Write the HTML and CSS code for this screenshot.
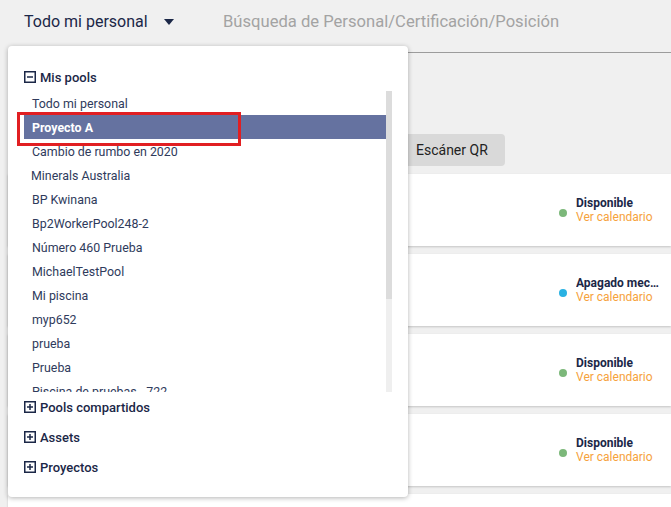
FILE: index.html
```html
<!DOCTYPE html>
<html lang="es">
<head>
<meta charset="utf-8">
<title>Personal</title>
<link rel="stylesheet" href="styles.css">
</head>
<body>
<div class="page">
  <header class="topbar">
    <div class="selector">
      <span class="selector-label">Todo mi personal</span>
      <svg class="caret" width="10" height="6" viewBox="0 0 10 6"><path d="M0 0 H10 L5 6 Z" fill="#1b2747"/></svg>
    </div>
    <div class="search">Búsqueda de Personal/Certificación/Posición</div>
  </header>

  <div class="toolbar">
    <button class="btn-qr">Escáner QR</button>
  </div>

  <div class="cards">
    <div class="card"><div class="status"><span class="dot green"></span><div class="status-text"><div class="status-name">Disponible</div><div class="status-link">Ver calendario</div></div></div></div>
    <div class="card"><div class="status"><span class="dot blue"></span><div class="status-text"><div class="status-name">Apagado mecánicamente</div><div class="status-link">Ver calendario</div></div></div></div>
    <div class="card"><div class="status"><span class="dot green"></span><div class="status-text"><div class="status-name">Disponible</div><div class="status-link">Ver calendario</div></div></div></div>
    <div class="card"><div class="status"><span class="dot green"></span><div class="status-text"><div class="status-name">Disponible</div><div class="status-link">Ver calendario</div></div></div></div>
    <div class="card"></div>
  </div>

  <div class="dropdown">
    <div class="group-head open">
      <svg class="box-icon" width="12" height="12" viewBox="0 0 12 12"><rect x="0.75" y="0.75" width="10.5" height="10.5" fill="none" stroke="#1b2747" stroke-width="1.5"/><path d="M3 6 H9" stroke="#1b2747" stroke-width="1.5"/></svg>
      <span>Mis pools</span>
    </div>
    <div class="pool-scroll">
      <ul class="pool-list">
        <li>Todo mi personal</li>
        <li class="selected">Proyecto A</li>
        <li>Cambio de rumbo en 2020</li>
        <li class="shift">Minerals Australia</li>
        <li>BP Kwinana</li>
        <li>Bp2WorkerPool248-2</li>
        <li>Número 460 Prueba</li>
        <li>MichaelTestPool</li>
        <li>Mi piscina</li>
        <li>myp652</li>
        <li>prueba</li>
        <li>Prueba</li>
        <li>Piscina de pruebas - 722</li>
      </ul>
      <div class="scrollbar"><div class="thumb"></div></div>
    </div>
    <div class="group-head collapsed first">
      <svg class="box-icon" width="12" height="12" viewBox="0 0 12 12"><rect x="0.75" y="0.75" width="10.5" height="10.5" fill="none" stroke="#1b2747" stroke-width="1.5"/><path d="M3 6 H9 M6 3 V9" stroke="#1b2747" stroke-width="1.5"/></svg>
      <span>Pools compartidos</span>
    </div>
    <div class="group-head collapsed">
      <svg class="box-icon" width="12" height="12" viewBox="0 0 12 12"><rect x="0.75" y="0.75" width="10.5" height="10.5" fill="none" stroke="#1b2747" stroke-width="1.5"/><path d="M3 6 H9 M6 3 V9" stroke="#1b2747" stroke-width="1.5"/></svg>
      <span>Assets</span>
    </div>
    <div class="group-head collapsed">
      <svg class="box-icon" width="12" height="12" viewBox="0 0 12 12"><rect x="0.75" y="0.75" width="10.5" height="10.5" fill="none" stroke="#1b2747" stroke-width="1.5"/><path d="M3 6 H9 M6 3 V9" stroke="#1b2747" stroke-width="1.5"/></svg>
      <span>Proyectos</span>
    </div>
    <div class="highlight-box"></div>
  </div>
</div>
</body>
</html>
```

FILE: styles.css
```css
* { box-sizing: border-box; }

html, body {
  margin: 0;
  padding: 0;
}

body {
  background: #f0f0f0;
  font-family: Roboto, "Noto Sans", Arial, sans-serif;
  color: #1b2747;
  overflow: hidden;
  width: 671px;
  height: 507px;
}

.page {
  position: relative;
  height: 507px;
  overflow: hidden;
}

.topbar {
  display: flex;
  height: 53px;
}

.selector {
  display: flex;
  align-items: center;
  gap: 16px;
  width: 199px;
  height: 42px;
  padding-left: 24px;
  font-size: 16px;
  color: #1b2747;
}

.caret {
  margin-top: 1px;
}

.search {
  flex: 1;
  height: 53px;
  padding-top: 13px;
  padding-left: 24px;
  font-size: 16.6px;
  line-height: 18px;
  color: #a3a3a3;
  border-bottom: 1px solid #9c9c9c;
}

.toolbar {
  display: flex;
  height: 121px;
  padding-top: 81px;
  padding-left: 401px;
}

.btn-qr {
  height: 32px;
  padding: 0 17px 0 15px;
  border: none;
  border-radius: 4px;
  background: #d9d9d9;
  font-family: Roboto, "Noto Sans", Arial, sans-serif;
  font-size: 14px;
  color: #222;
}

.cards {
  display: flex;
  flex-direction: column;
  gap: 8px;
  padding-left: 8px;
}

.card {
  height: 72px;
  flex: none;
  background: #fff;
  box-shadow: 0 1px 2px rgba(0, 0, 0, 0.18);
  display: flex;
  justify-content: flex-end;
  align-items: center;
}

.status {
  width: 112px;
  display: flex;
  align-items: center;
  gap: 9px;
}

.dot {
  width: 8px;
  height: 8px;
  border-radius: 50%;
  flex: none;
  margin-top: 5px;
}

.dot.green { background: #7cb87a; }
.dot.blue { background: #29b2e3; }

.status-text {
  min-width: 0;
  flex: 1;
  padding-right: 8px;
  font-size: 12px;
  line-height: 14px;
}

.status-name {
  font-weight: 700;
  color: #1b2747;
  white-space: nowrap;
  overflow: hidden;
  text-overflow: ellipsis;
}

.status-link {
  color: #f6a23c;
  white-space: nowrap;
}

/* dropdown overlay */
.dropdown {
  position: absolute;
  left: 8px;
  top: 46px;
  width: 400px;
  height: 451px;
  background: #fff;
  border-radius: 4px;
  box-shadow: 0 1px 5px rgba(0, 0, 0, 0.3);
  padding: 19px 16px 18px 16px;
}

.group-head {
  display: flex;
  align-items: center;
  gap: 4px;
  height: 24px;
  font-size: 13px;
  font-weight: 500;
  color: #1b2747;
}

.group-head.open {
  margin-bottom: 2px;
}

.group-head.collapsed {
  margin-top: 6px;
}

.group-head.first {
  margin-top: 3px;
}

.box-icon {
  flex: none;
}

.pool-scroll {
  display: flex;
  width: 368px;
  height: 301px;
}

.pool-list {
  list-style: none;
  margin: 0;
  padding: 0;
  flex: 1;
  min-width: 0;
  height: 301px;
  overflow: hidden;
}

.pool-list li {
  height: 24px;
  line-height: 24px;
  padding-left: 8px;
  padding-top: 1px;
  font-size: 12.4px;
  color: #2f3b5c;
  white-space: nowrap;
}

.pool-list li.shift {
  padding-left: 7px;
}

.pool-list li.selected {
  background: #6572a0;
  color: #fff;
  font-weight: 700;
}

.scrollbar {
  width: 6px;
  flex: none;
  height: 301px;
  background: #efefef;
}

.thumb {
  height: 208px;
  background: #dcdcdc;
}

.highlight-box {
  position: absolute;
  left: 9px;
  top: 66px;
  width: 224px;
  height: 34px;
  border: 3px solid #e11f22;
}
```
